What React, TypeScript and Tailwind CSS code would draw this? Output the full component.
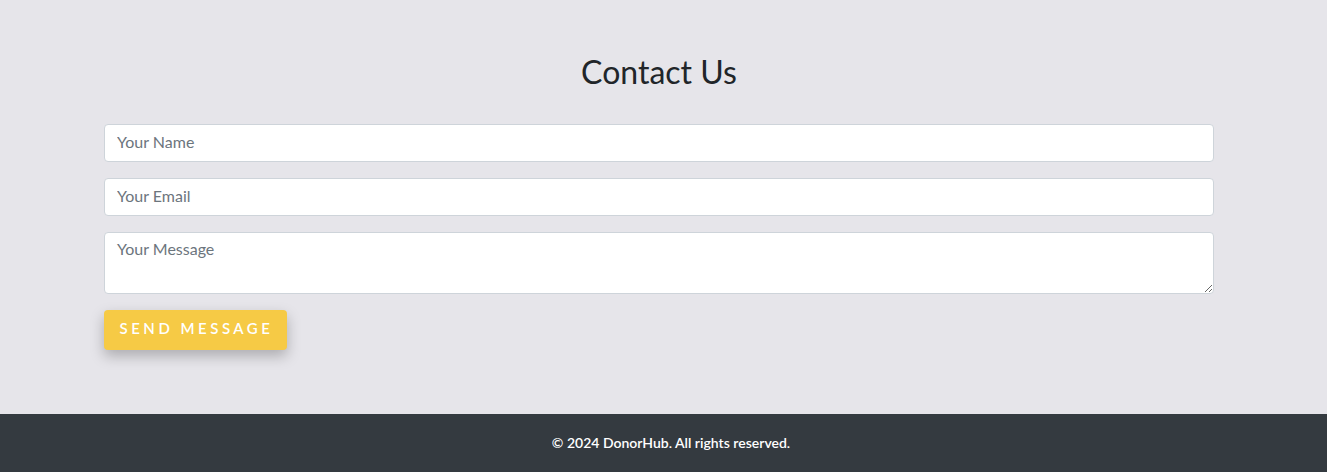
import React from 'react';

const font = { fontFamily: '"Lato", "Noto Sans", sans-serif' };

export default function App() {
  return (
    <div className="min-h-screen bg-[#e6e5ea]" style={font}>
      <section className="pt-[53px] pb-[64px]">
        <div className="ml-[104px] w-[1110px]">
          <h2 className="mb-[33px] text-center text-[32px] leading-[38px] font-normal text-[#212529]">
            Contact Us
          </h2>
          <form className="flex flex-col gap-4" onSubmit={(e) => e.preventDefault()}>
            <input
              type="text"
              placeholder="Your Name"
              className="h-[38px] w-full rounded border border-[#ced4da] bg-white px-3 pb-[3px] text-base text-[#495057] placeholder:text-[#6c757d] outline-none"
            />
            <input
              type="email"
              placeholder="Your Email"
              className="h-[38px] w-full rounded border border-[#ced4da] bg-white px-3 pb-[3px] text-base text-[#495057] placeholder:text-[#6c757d] outline-none"
            />
            <textarea
              rows={2}
              placeholder="Your Message"
              className="block h-[62px] w-full rounded border border-[#ced4da] bg-white px-3 pt-1 pb-1.5 text-base leading-6 text-[#495057] placeholder:text-[#6c757d] outline-none"
            />
            <div>
              <button
                type="submit"
                className="h-10 w-[183px] rounded bg-[#f6ca45] pl-[2px] pb-[3px] text-[15px] font-semibold uppercase tracking-[3.5px] text-white shadow-[0_6px_14px_rgba(0,0,0,0.25)]"
              >
                Send Message
              </button>
            </div>
          </form>
        </div>
      </section>
      <footer className="flex h-[58px] items-center justify-center bg-[#343a40] pl-[15px] text-sm font-semibold text-white">
        © 2024 DonorHub. All rights reserved.
      </footer>
    </div>
  );
}
